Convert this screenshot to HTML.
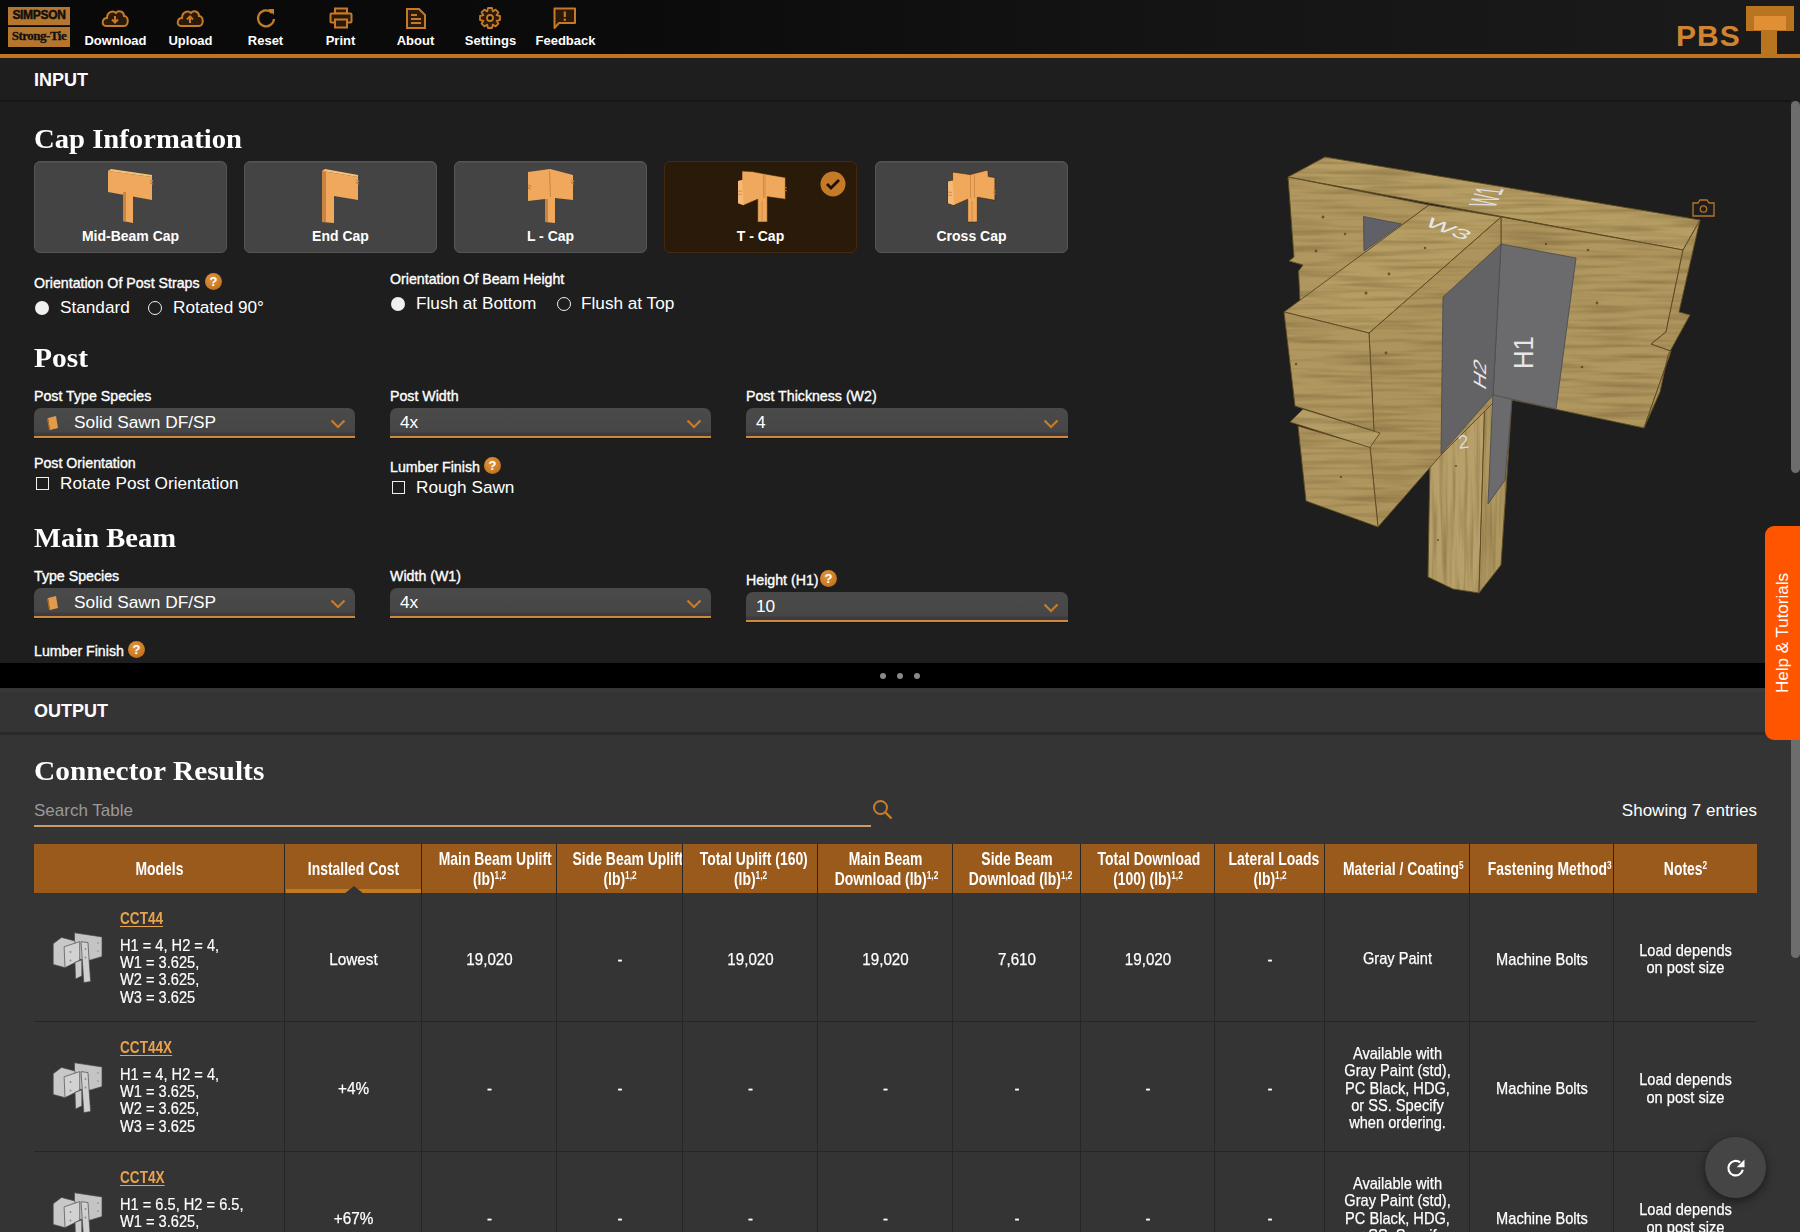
<!DOCTYPE html>
<html><head><meta charset="utf-8">
<style>
*{box-sizing:border-box;margin:0;padding:0}
html,body{width:1800px;height:1232px;overflow:hidden;background:#1e1e1e;font-family:"Liberation Sans",sans-serif;color:#fff}
.a{position:absolute;white-space:nowrap}
.tc{text-align:center}
sup{line-height:0}
#top{position:absolute;left:0;top:0;width:1800px;height:54px;background:linear-gradient(to right,#090909 0%,#0b0b0b 35%,#141414 65%,#1b1b1b 100%)}
#oline{position:absolute;left:0;top:54px;width:1800px;height:4px;background:#c2731f}
.nav{position:absolute;top:0;width:75px;height:54px;text-align:center}
.nav span{position:absolute;left:0;right:0;top:33px;font-size:13px;font-weight:bold;color:#fff}
.nav svg{position:absolute;left:27px;top:6px}
.lbl{position:absolute;font-size:14.2px;color:#fff;white-space:nowrap;-webkit-text-stroke:0.35px #fff}
.h2{position:absolute;font-family:"Liberation Serif",serif;font-weight:bold;font-size:27.5px;line-height:32px;color:#fff;white-space:nowrap;transform-origin:0 0}
.card{position:absolute;top:161px;width:193px;height:92px;background:#444;border-radius:6px;border:1px solid #555;box-shadow:inset 0 1px 0 #4c4c4c}
.card span{position:absolute;left:0;right:0;top:66px;text-align:center;font-size:14px;font-weight:bold}
.sel{position:absolute;height:30px;background:linear-gradient(to bottom,#4a4a4a 0,#464646 24px,#3f3a40 25px,#3f3a40 28px);border-radius:7px 7px 0 0;border-bottom:2px solid #c98a3a;box-shadow:0 1px 0 #1a1210}
.sel span{position:absolute;left:10px;top:4px;font-size:17.3px}
.sel svg{position:absolute;right:9px;top:11px}
.radio{position:absolute;font-size:17.2px;white-space:nowrap;margin-top:1px}
.help{position:absolute;width:17px;height:17px;border-radius:50%;background:radial-gradient(circle at 40% 35%,#e0963e 0,#c97a25 60%,#a9631a 100%);color:#fff;font-size:13px;font-weight:bold;text-align:center;line-height:17px}
</style></head><body>
<div id="top"></div>
<div id="oline"></div>

<!-- logo -->
<div class="a" style="left:8px;top:7px;width:62px;height:19px;background:#b5772e;border-bottom:1px solid #2a1a08"></div>
<div class="a" style="left:8px;top:27px;width:62px;height:20px;background:#b5772e"></div>
<div class="a" style="left:8px;top:8px;width:62px;text-align:center;font-size:12px;font-weight:bold;color:#111;letter-spacing:-0.3px;-webkit-text-stroke:0.5px #111">SIMPSON</div>
<div class="a" style="left:8px;top:28px;width:62px;text-align:center;font-family:'Liberation Serif',serif;font-size:13px;font-weight:bold;color:#111;letter-spacing:-0.5px;-webkit-text-stroke:0.3px #111">Strong-Tie</div>

<div class="nav" style="left:78px"><svg width="22" height="22" viewBox="0 0 22 22" style="left:26px;top:7px;overflow:visible"><path d="M2,19 C-3,19 -2,11 3,11 C3,5 9,3 12,6 C14,3 20,4 20,9 C25,9 25,19 20,19 Z" fill="#2b1a0a" stroke="#c47a27" stroke-width="2"/><path d="M11,9 L11,15 M8,12.5 L11,15.5 L14,12.5" stroke="#c47a27" stroke-width="2" fill="none"/></svg><span>Download</span></div>
<div class="nav" style="left:153px"><svg width="22" height="22" viewBox="0 0 22 22" style="left:26px;top:7px;overflow:visible"><path d="M2,19 C-3,19 -2,11 3,11 C3,5 9,3 12,6 C14,3 20,4 20,9 C25,9 25,19 20,19 Z" fill="#2b1a0a" stroke="#c47a27" stroke-width="2"/><path d="M11,16 L11,10 M8,12.5 L11,9.5 L14,12.5" stroke="#c47a27" stroke-width="2" fill="none"/></svg><span>Upload</span></div>
<div class="nav" style="left:228px"><svg width="22" height="22" viewBox="0 0 22 22" style="left:27px;top:7px"><path d="M17,6 A8,8 0 1 0 19,12" fill="none" stroke="#c47a27" stroke-width="2.2"/><path d="M13,2 L19,2 L19,8 Z" fill="#c47a27"/></svg><span>Reset</span></div>
<div class="nav" style="left:303px"><svg width="24" height="22" viewBox="0 0 24 22" style="left:26px;top:7px"><rect x="6" y="1.5" width="12" height="5" fill="#2b1a0a" stroke="#c47a27" stroke-width="2"/><rect x="1.5" y="6.5" width="21" height="9" rx="1" fill="#2b1a0a" stroke="#c47a27" stroke-width="2"/><rect x="6" y="12.5" width="12" height="8" fill="#2b1a0a" stroke="#c47a27" stroke-width="2"/></svg><span>Print</span></div>
<div class="nav" style="left:378px"><svg width="22" height="22" viewBox="0 0 22 22" style="left:27px;top:7px"><path d="M2,2 L14,2 L20,8 L20,21 L2,21 Z" fill="#2b1a0a" stroke="#c47a27" stroke-width="2"/><path d="M6,8 L12,8 M6,12 L16,12 M6,16 L16,16" stroke="#c47a27" stroke-width="2"/></svg><span>About</span></div>
<div class="nav" style="left:453px"><svg width="24" height="24" viewBox="-12 -12 24 24" style="left:25px;top:6px"><path d="M-2,-11 L2,-11 L2.8,-7.6 L5.6,-9.4 L8.4,-6.6 L6.6,-3.8 L10,-3 L10,1 L6.6,1.8 L8.4,4.6 L5.6,7.4 L2.8,5.6 L2,9 L-2,9 L-2.8,5.6 L-5.6,7.4 L-8.4,4.6 L-6.6,1.8 L-10,1 L-10,-3 L-6.6,-3.8 L-8.4,-6.6 L-5.6,-9.4 L-2.8,-7.6 Z" transform="translate(0,1)" fill="#2b1a0a" stroke="#c47a27" stroke-width="1.8" stroke-linejoin="round"/><circle cx="0" cy="0" r="3" fill="#0a0a0a" stroke="#c47a27" stroke-width="1.8"/></svg><span>Settings</span></div>
<div class="nav" style="left:528px"><svg width="24" height="24" viewBox="0 0 24 24" style="left:25px;top:7px"><path d="M1.5,1.5 L22,1.5 L22,16 L6,16 L1.5,21 Z" fill="#2b1a0a" stroke="#c47a27" stroke-width="2" stroke-linejoin="round"/><path d="M11.8,4.5 L11.8,10" stroke="#c47a27" stroke-width="2.2"/><circle cx="11.8" cy="12.8" r="1.3" fill="#c47a27"/></svg><span>Feedback</span></div>

<!-- PBS logo -->
<div class="a" style="left:1676px;top:19px;font-size:30px;font-weight:bold;color:#d1842f;letter-spacing:1px">PBS</div>
<div class="a" style="left:1746px;top:6px;width:48px;height:25px;background:#b8741f"></div>
<div class="a" style="left:1754px;top:16px;width:32px;height:14px;background:#e08f35"></div>
<div class="a" style="left:1761px;top:31px;width:16px;height:27px;background:#b8741f"></div>

<!-- INPUT header -->
<div class="a" style="left:34px;top:70px;font-size:18px;font-weight:bold">INPUT</div>
<div class="a" style="left:0;top:100px;width:1790px;height:2px;background:#161616"></div>

<div class="h2" style="left:34px;top:123px;transform:scaleX(1.043)">Cap Information</div>

<div class="card" style="left:34px"><span>Mid-Beam Cap</span></div>
<div class="card" style="left:244px"><span>End Cap</span></div>
<div class="card" style="left:454px"><span>L - Cap</span></div>
<div class="card" style="left:664px;background:#2a1a0a;border:1px solid #43290f;box-shadow:none"><span>T - Cap</span></div>
<div class="card" style="left:875px"><span>Cross Cap</span></div>

<div class="lbl" style="left:34px;top:275px">Orientation Of Post Straps</div>
<div class="lbl" style="left:390px;top:271px">Orientation Of Beam Height</div>


<!-- cap icons -->
<svg class="a" style="left:100px;top:165px" width="60" height="62" viewBox="100 165 60 62">
 <path d="M108,171 L152,177 L152,200 L108,192 Z" fill="#f0a95c"/>
 <path d="M108,171 L111,169 L152,175 L152,177 Z" fill="#f6c07a"/>
 <path d="M123,192 L133,194 L133,223 L123,221 Z" fill="#f0a95c"/>
 <path d="M123,192 L126,192 L126,222 L123,221 Z" fill="#c98540"/>
 <path d="M150,180 L153,181 L150,183 L153,184" stroke="#c98540" stroke-width="1" fill="none"/>
</svg>
<svg class="a" style="left:310px;top:165px" width="60" height="62" viewBox="310 165 60 62">
 <path d="M322,171 L358,177 L358,200 L334,196 L334,223 L322,222 Z" fill="#f0a95c"/>
 <path d="M322,171 L325,169 L358,175 L358,177 Z" fill="#f6c07a"/>
 <path d="M322,171 L326,172 L326,222 L322,222 Z" fill="#c98540"/>
 <path d="M356,180 L359,181 L356,183 L359,184" stroke="#c98540" stroke-width="1" fill="none"/>
</svg>
<svg class="a" style="left:520px;top:165px" width="60" height="62" viewBox="520 165 60 62">
 <path d="M528,172 L550,169 L573,175 L573,200 L555,198 L555,223 L545,222 L545,199 L528,201 Z" fill="#f0a95c"/>
 <path d="M549,172 L550,197 L551,197 L550,170 Z" fill="#c98540"/>
 <path d="M545,199 L548,199 L548,222 L545,222 Z" fill="#c98540"/>
 <path d="M528,185 L531,186 L528,188 L531,189 M571,180 L574,181 L571,183 L574,184" stroke="#c98540" stroke-width="1" fill="none"/>
</svg>
<svg class="a" style="left:730px;top:165px" width="62" height="62" viewBox="730 165 62 62">
 <path d="M742,171 L752,171.6 L785.4,177.6 L785.4,199.2 L767.3,196.7 L767.3,222 L757.7,222 L757.7,199.2 L743.6,205.3 L738,203.3 L738,181 L742,180 Z" fill="#f0a95c" stroke="#3a2208" stroke-width="0.6"/>
 <path d="M738,181 L742,180 L743.6,205.3 L738,203.3 Z" fill="#f5b978"/>
 <path d="M763.5,174 L763.5,198 M765,174 L765,198 M762,201 L762,221" stroke="#c98540" stroke-width="0.8" fill="none"/>
 <path d="M738,191 L742,191.5 M738,194 L742,194.5 M784,187 L787,188 M784,190 L787,191" stroke="#c98540" stroke-width="0.8" fill="none"/>
</svg>
<svg class="a" style="left:940px;top:165px" width="62" height="62" viewBox="940 165 62 62">
 <path d="M952.6,172 L970.2,174.6 L987.8,170 L988.3,176.6 L994.9,177.6 L994.9,200.3 L977.3,197.2 L977.3,222 L967.7,222 L967.7,199.2 L954.1,205.3 L948,203.3 L948,181.6 L952.6,180.6 Z" fill="#f0a95c" stroke="#3a2208" stroke-width="0.6"/>
 <path d="M948,181.6 L952.6,180.6 L954.1,205.3 L948,203.3 Z" fill="#f5b978"/>
 <path d="M970.5,175 L970.5,198 M974.5,175 L974.5,198 M972,201 L972,221" stroke="#c98540" stroke-width="0.8" fill="none"/>
 <path d="M948,192 L952,192.5 M948,195 L952,195.5 M993,190 L996,191 M993,193 L996,194" stroke="#c98540" stroke-width="0.8" fill="none"/>
</svg>
<!-- check -->
<svg class="a" style="left:820px;top:171px" width="26" height="26" viewBox="0 0 26 26"><circle cx="13" cy="13" r="12.5" fill="#c47a27"/><path d="M7,13 L11,17 L19,9" fill="none" stroke="#1a1008" stroke-width="2.8"/></svg>

<!-- help icons -->
<div class="help" style="left:205px;top:273px">?</div>
<div class="help" style="left:484px;top:457px">?</div>
<div class="help" style="left:820px;top:570px">?</div>
<div class="help" style="left:128px;top:641px">?</div>

<!-- radios -->
<div class="a" style="left:35px;top:301px;width:14px;height:14px;border-radius:50%;background:#f0f0f0"></div>
<div class="radio" style="left:60px;top:296px">Standard</div>
<div class="a" style="left:148px;top:301px;width:14px;height:14px;border-radius:50%;border:1.5px solid #f0f0f0"></div>
<div class="radio" style="left:173px;top:296px">Rotated 90°</div>
<div class="a" style="left:391px;top:297px;width:14px;height:14px;border-radius:50%;background:#f0f0f0"></div>
<div class="radio" style="left:416px;top:292px">Flush at Bottom</div>
<div class="a" style="left:557px;top:297px;width:14px;height:14px;border-radius:50%;border:1.5px solid #f0f0f0"></div>
<div class="radio" style="left:581px;top:292px">Flush at Top</div>
<!-- checkboxes -->
<div class="a" style="left:36px;top:477px;width:13px;height:13px;border:1.5px solid #f0f0f0"></div>
<div class="radio" style="left:60px;top:472px">Rotate Post Orientation</div>
<div class="a" style="left:392px;top:481px;width:13px;height:13px;border:1.5px solid #f0f0f0"></div>
<div class="radio" style="left:416px;top:476px">Rough Sawn</div>
<div class="h2" style="left:34px;top:342px;transform:scaleX(1.07)">Post</div>
<div class="lbl" style="left:34px;top:388px">Post Type Species</div>
<div class="lbl" style="left:390px;top:388px">Post Width</div>
<div class="lbl" style="left:746px;top:388px">Post Thickness (W2)</div>
<div class="sel" style="left:34px;top:408px;width:321px"><svg width="16" height="16" viewBox="0 0 16 16" style="left:11px;top:7px;right:auto"><path d="M3,3 L11,1 L13,13 L5,15 Z" fill="#e39a4a"/><path d="M3,3 L5,15 L4,15 L2,4 Z" fill="#b06a20"/></svg><span style="left:40px">Solid Sawn DF/SP</span><svg width="16" height="10" viewBox="0 0 16 10"><path d="M1.5,1.5 L8,8 L14.5,1.5" fill="none" stroke="#c97c2a" stroke-width="2.2"/></svg></div>
<div class="sel" style="left:390px;top:408px;width:321px"><span>4x</span><svg width="16" height="10" viewBox="0 0 16 10"><path d="M1.5,1.5 L8,8 L14.5,1.5" fill="none" stroke="#c97c2a" stroke-width="2.2"/></svg></div>
<div class="sel" style="left:746px;top:408px;width:322px"><span>4</span><svg width="16" height="10" viewBox="0 0 16 10"><path d="M1.5,1.5 L8,8 L14.5,1.5" fill="none" stroke="#c97c2a" stroke-width="2.2"/></svg></div>

<div class="lbl" style="left:34px;top:455px">Post Orientation</div>
<div class="lbl" style="left:390px;top:459px">Lumber Finish</div>

<div class="h2" style="left:34px;top:522px;transform:scaleX(1.04)">Main Beam</div>
<div class="lbl" style="left:34px;top:568px">Type Species</div>
<div class="lbl" style="left:390px;top:568px">Width (W1)</div>
<div class="lbl" style="left:746px;top:572px">Height (H1)</div>
<div class="sel" style="left:34px;top:588px;width:321px"><svg width="16" height="16" viewBox="0 0 16 16" style="left:11px;top:7px;right:auto"><path d="M3,3 L11,1 L13,13 L5,15 Z" fill="#e39a4a"/><path d="M3,3 L5,15 L4,15 L2,4 Z" fill="#b06a20"/></svg><span style="left:40px">Solid Sawn DF/SP</span><svg width="16" height="10" viewBox="0 0 16 10"><path d="M1.5,1.5 L8,8 L14.5,1.5" fill="none" stroke="#c97c2a" stroke-width="2.2"/></svg></div>
<div class="sel" style="left:390px;top:588px;width:321px"><span>4x</span><svg width="16" height="10" viewBox="0 0 16 10"><path d="M1.5,1.5 L8,8 L14.5,1.5" fill="none" stroke="#c97c2a" stroke-width="2.2"/></svg></div>
<div class="sel" style="left:746px;top:592px;width:322px"><span>10</span><svg width="16" height="10" viewBox="0 0 16 10"><path d="M1.5,1.5 L8,8 L14.5,1.5" fill="none" stroke="#c97c2a" stroke-width="2.2"/></svg></div>
<div class="lbl" style="left:34px;top:643px">Lumber Finish</div>


<!-- 3D model -->
<svg class="a" style="left:0;top:0" width="1800" height="663" viewBox="0 0 1800 663">
 <defs>
  <filter id="grain" x="1270" y="150" width="440" height="450" filterUnits="userSpaceOnUse" color-interpolation-filters="sRGB">
   <feTurbulence type="fractalNoise" baseFrequency="0.012 0.2" numOctaves="2" seed="5" result="n"/>
   <feColorMatrix in="n" type="matrix" values="0 0 0 0 0.45  0 0 0 0 0.36  0 0 0 0 0.2  0 0 0 -1.1 0.64" result="g"/>
   <feComposite in="g" in2="SourceAlpha" operator="in" result="gc"/>
   <feMerge><feMergeNode in="SourceGraphic"/><feMergeNode in="gc"/></feMerge>
  </filter>
  <filter id="grainv" x="1420" y="380" width="100" height="220" filterUnits="userSpaceOnUse" color-interpolation-filters="sRGB">
   <feTurbulence type="fractalNoise" baseFrequency="0.25 0.012" numOctaves="2" seed="7" result="n"/>
   <feColorMatrix in="n" type="matrix" values="0 0 0 0 0.45  0 0 0 0 0.36  0 0 0 0 0.2  0 0 0 -1.1 0.64" result="g"/>
   <feComposite in="g" in2="SourceAlpha" operator="in" result="gc"/>
   <feMerge><feMergeNode in="SourceGraphic"/><feMergeNode in="gc"/></feMerge>
  </filter>
 </defs>
 <g stroke="#5a4822" stroke-width="0.9" stroke-linejoin="round" filter="url(#grainv)">
  <path d="M1430,455 L1485,396 L1479,593 L1453,589 L1428,577 Z" fill="#b7a069"/>
  <path d="M1485,396 L1512,399 L1501,565 L1479,593 Z" fill="#af9760"/>
 </g>
 <g stroke="#5a4822" stroke-width="0.9" stroke-linejoin="round" filter="url(#grain)">
  <path d="M1288,177 L1325,157 L1700,220 L1683,250 Z" fill="#b59d63"/>
  <path d="M1288,177 L1429,205 L1300,301 L1298.5,271 L1303,265 L1289,261 L1294,257 Z" fill="#b0975f"/>
  <path d="M1501,217 L1683,250 L1666,332 L1651,344 L1671,351 L1644,428 L1512,400 L1501,395 Z" fill="#b0975f"/>
  <path d="M1683,250 L1700,220 L1679,312 L1690,315 L1668,355 L1660,392 L1644,428 L1671,351 L1651,344 L1666,332 Z" fill="#ad945c"/>
  <path d="M1369,333 L1501,217 L1501,395 L1441,455 L1378,527 L1370,447 L1374,431 Z" fill="#ad945c"/>
  <path d="M1284,312 L1429,205 L1501,217 L1369,333 Z" fill="#b59d63"/>
  <path d="M1284,312 L1369,333 L1374,431 L1295,406 Z" fill="#b0975f"/>
  <path d="M1298,426 L1370,447 L1378,527 L1306,501 Z" fill="#b0975f"/>
  <path d="M1303,409 L1380,433 L1370,447.5 L1290,422 Z" fill="#b59e66"/>
 </g>
 <g stroke="#4e4e50" stroke-width="0.9" stroke-linejoin="round">
  <path d="M1493,392 L1512,399 L1505,480 L1488,504 Z" fill="#6b6b6e"/>
  <path d="M1363.5,216.5 L1401.5,224 L1364,251 Z" fill="#5f6068"/>
  <path d="M1501,244 L1576,258 L1556,409 L1493,395 Z" fill="#6b6b6e"/>
  <path d="M1501,244 L1443,297 L1441,454 L1493,395 Z" fill="#636366"/>
 </g>
 <g fill="#5a4420" opacity="0.8">
  <circle cx="1366" cy="293" r="1.5"/><circle cx="1389" cy="274" r="1.4"/><circle cx="1425" cy="248" r="1.3"/><circle cx="1386" cy="353" r="1.4"/><circle cx="1296" cy="364" r="1.3"/>
  <circle cx="1323" cy="217" r="1.5"/><circle cx="1316" cy="251" r="1.4"/><circle cx="1345" cy="234" r="1.3"/><circle cx="1546" cy="244" r="1.2"/><circle cx="1588" cy="250" r="1.3"/><circle cx="1597" cy="303" r="1.4"/><circle cx="1582" cy="367" r="1.3"/>
  <circle cx="1341" cy="477" r="1.2"/><circle cx="1438" cy="540" r="1.1"/><circle cx="1456" cy="466" r="1.1"/>
 </g>
 <g fill="#e6e6e6" font-family="Liberation Sans">
  <text transform="translate(1533,369) rotate(-90) scale(0.95,1)" font-size="27">H1</text>
  <text transform="translate(1486,391) rotate(-90) skewX(-30) scale(1,0.85)" font-size="21">H2</text>
  <text transform="translate(1423,225) rotate(20) scale(1.25,0.62) skewX(-15)" font-size="24">W3</text>
  <text transform="matrix(0.5,-1.05,3.2,0.35,1495,208)" font-size="12" fill="#ddd">W1</text>
  <text transform="translate(1459,449) rotate(-8)" font-size="19" fill="#d8d8d8">2</text>
 </g>
 <g stroke="#b8752a" stroke-width="1.3" fill="none"><path d="M1693,203 L1698,203 L1700,200 L1707,200 L1709,203 L1714,203 L1714,216 L1693,216 Z"/><circle cx="1703.5" cy="209" r="3.2"/></g>
</svg>
<!-- splitter -->
<div class="a" style="left:0;top:663px;width:1800px;height:25px;background:#000"></div>

<!-- OUTPUT -->
<div class="a" style="left:0;top:688px;width:1800px;height:544px;background:#343434"></div>
<div class="a" style="left:0;top:689px;width:1790px;height:3px;background:#383838"></div>
<div class="a" style="left:0;top:732px;width:1790px;height:3px;background:#2a2a2a"></div>
<div class="a" style="left:34px;top:701px;font-size:18px;font-weight:bold">OUTPUT</div>
<div class="h2" style="left:34px;top:755px;transform:scaleX(1.068)">Connector Results</div>
<div class="a" style="left:34px;top:801px;font-size:17px;color:#9a9a9a">Search Table</div>
<div class="a" style="left:34px;top:825px;width:837px;height:2px;background:#c99a6c"></div>
<svg class="a" style="left:872px;top:799px" width="22" height="22" viewBox="0 0 22 22"><circle cx="8.5" cy="8.5" r="6.5" fill="none" stroke="#c97c2a" stroke-width="2"/><path d="M13.5,13.5 L19.5,19.5" stroke="#c97c2a" stroke-width="2.4"/></svg>
<div class="a" style="left:1600px;top:801px;width:1157px;font-size:17px;color:#fff;text-align:right;left:600px">Showing 7 entries</div>
<!--TABLE-->
<div class="a" style="left:34px;top:844px;width:1723px;height:49px;background:#9a5a1c"></div>
<div class="a" style="left:286px;top:889px;width:136px;height:4px;background:#c27a22"></div>
<svg class="a" style="left:343px;top:885px" width="22" height="9" viewBox="0 0 22 9"><path d="M1,9 L11,1 L21,9 Z" fill="#333"/></svg>
<div class="a tc" style="left:34px;top:858.5px;width:251px;line-height:20px;font-size:18.5px;font-weight:bold;color:#fff"><div style="transform:scaleX(0.753);transform-origin:50% 50%;white-space:nowrap">Models</div></div>
<div class="a tc" style="left:285px;top:858.5px;width:137px;line-height:20px;font-size:18.5px;font-weight:bold;color:#fff"><div style="transform:scaleX(0.753);transform-origin:50% 50%;white-space:nowrap">Installed Cost</div></div>
<div class="a tc" style="left:422px;top:848.5px;width:135px;line-height:20px;font-size:18.5px;font-weight:bold;color:#fff"><div style="transform:scaleX(0.753);transform-origin:50% 50%;white-space:nowrap">Main Beam Uplift<br>(lb)<sup style="font-size:11px;vertical-align:6px;font-weight:bold">1,2</sup></div></div>
<div class="a tc" style="left:557px;top:848.5px;width:126px;line-height:20px;font-size:18.5px;font-weight:bold;color:#fff"><div style="transform:scaleX(0.753);transform-origin:50% 50%;white-space:nowrap">Side Beam Uplift<br>(lb)<sup style="font-size:11px;vertical-align:6px;font-weight:bold">1,2</sup></div></div>
<div class="a tc" style="left:683px;top:848.5px;width:135px;line-height:20px;font-size:18.5px;font-weight:bold;color:#fff"><div style="transform:scaleX(0.753);transform-origin:50% 50%;white-space:nowrap">Total Uplift (160)<br>(lb)<sup style="font-size:11px;vertical-align:6px;font-weight:bold">1,2</sup></div></div>
<div class="a tc" style="left:818px;top:848.5px;width:135px;line-height:20px;font-size:18.5px;font-weight:bold;color:#fff"><div style="transform:scaleX(0.753);transform-origin:50% 50%;white-space:nowrap">Main Beam<br>Download (lb)<sup style="font-size:11px;vertical-align:6px;font-weight:bold">1,2</sup></div></div>
<div class="a tc" style="left:953px;top:848.5px;width:128px;line-height:20px;font-size:18.5px;font-weight:bold;color:#fff"><div style="transform:scaleX(0.753);transform-origin:50% 50%;white-space:nowrap">Side Beam<br>Download (lb)<sup style="font-size:11px;vertical-align:6px;font-weight:bold">1,2</sup></div></div>
<div class="a tc" style="left:1081px;top:848.5px;width:134px;line-height:20px;font-size:18.5px;font-weight:bold;color:#fff"><div style="transform:scaleX(0.753);transform-origin:50% 50%;white-space:nowrap">Total Download<br>(100) (lb)<sup style="font-size:11px;vertical-align:6px;font-weight:bold">1,2</sup></div></div>
<div class="a tc" style="left:1215px;top:848.5px;width:110px;line-height:20px;font-size:18.5px;font-weight:bold;color:#fff"><div style="transform:scaleX(0.753);transform-origin:50% 50%;white-space:nowrap">Lateral Loads<br>(lb)<sup style="font-size:11px;vertical-align:6px;font-weight:bold">1,2</sup></div></div>
<div class="a tc" style="left:1325px;top:858.5px;width:145px;line-height:20px;font-size:18.5px;font-weight:bold;color:#fff"><div style="transform:scaleX(0.753);transform-origin:50% 50%;white-space:nowrap">Material / Coating<sup style="font-size:11px;vertical-align:6px;font-weight:bold">5</sup></div></div>
<div class="a tc" style="left:1470px;top:858.5px;width:144px;line-height:20px;font-size:18.5px;font-weight:bold;color:#fff"><div style="transform:scaleX(0.753);transform-origin:50% 50%;white-space:nowrap">Fastening Method<sup style="font-size:11px;vertical-align:6px;font-weight:bold">3</sup></div></div>
<div class="a tc" style="left:1614px;top:858.5px;width:143px;line-height:20px;font-size:18.5px;font-weight:bold;color:#fff"><div style="transform:scaleX(0.753);transform-origin:50% 50%;white-space:nowrap">Notes<sup style="font-size:11px;vertical-align:6px;font-weight:bold">2</sup></div></div>
<div class="a" style="left:120px;top:910px;font-size:17px;line-height:18px;color:#e9a24e;font-weight:bold;text-decoration:underline;text-underline-offset:2px;transform:scaleX(0.8);transform-origin:0 0">CCT44</div>
<div class="a" style="left:120px;top:937px;font-size:17px;line-height:17.2px;color:#fff;-webkit-text-stroke:0.2px #fff;transform:scaleX(0.86);transform-origin:0 0">H1 = 4, H2 = 4,<br>W1 = 3.625,<br>W2 = 3.625,<br>W3 = 3.625</div>
<div class="a tc" style="left:285px;top:950.5px;width:137px;line-height:17px;font-size:17px;font-weight:normal;color:#fff;-webkit-text-stroke:0.25px #fff"><div style="transform:scaleX(0.9);transform-origin:50% 50%;white-space:nowrap">Lowest</div></div>
<div class="a tc" style="left:422px;top:950.5px;width:135px;line-height:17px;font-size:17px;font-weight:normal;color:#fff;-webkit-text-stroke:0.25px #fff"><div style="transform:scaleX(0.89);transform-origin:50% 50%;white-space:nowrap">19,020</div></div>
<div class="a tc" style="left:557px;top:950.5px;width:126px;line-height:17px;font-size:17px;font-weight:normal;color:#fff;-webkit-text-stroke:0.25px #fff"><div style="transform:scaleX(0.89);transform-origin:50% 50%;white-space:nowrap">-</div></div>
<div class="a tc" style="left:683px;top:950.5px;width:135px;line-height:17px;font-size:17px;font-weight:normal;color:#fff;-webkit-text-stroke:0.25px #fff"><div style="transform:scaleX(0.89);transform-origin:50% 50%;white-space:nowrap">19,020</div></div>
<div class="a tc" style="left:818px;top:950.5px;width:135px;line-height:17px;font-size:17px;font-weight:normal;color:#fff;-webkit-text-stroke:0.25px #fff"><div style="transform:scaleX(0.89);transform-origin:50% 50%;white-space:nowrap">19,020</div></div>
<div class="a tc" style="left:953px;top:950.5px;width:128px;line-height:17px;font-size:17px;font-weight:normal;color:#fff;-webkit-text-stroke:0.25px #fff"><div style="transform:scaleX(0.89);transform-origin:50% 50%;white-space:nowrap">7,610</div></div>
<div class="a tc" style="left:1081px;top:950.5px;width:134px;line-height:17px;font-size:17px;font-weight:normal;color:#fff;-webkit-text-stroke:0.25px #fff"><div style="transform:scaleX(0.89);transform-origin:50% 50%;white-space:nowrap">19,020</div></div>
<div class="a tc" style="left:1215px;top:950.5px;width:110px;line-height:17px;font-size:17px;font-weight:normal;color:#fff;-webkit-text-stroke:0.25px #fff"><div style="transform:scaleX(0.89);transform-origin:50% 50%;white-space:nowrap">-</div></div>
<div class="a tc" style="left:1325px;top:950.4px;width:145px;line-height:17.3px;font-size:17px;font-weight:normal;color:#fff;-webkit-text-stroke:0.25px #fff"><div style="transform:scaleX(0.86);transform-origin:50% 50%;white-space:nowrap">Gray Paint</div></div>
<div class="a tc" style="left:1470px;top:950.5px;width:144px;line-height:17px;font-size:17px;font-weight:normal;color:#fff;-webkit-text-stroke:0.25px #fff"><div style="transform:scaleX(0.86);transform-origin:50% 50%;white-space:nowrap">Machine Bolts</div></div>
<div class="a tc" style="left:1614px;top:941.5px;width:143px;line-height:17.5px;font-size:17px;font-weight:normal;color:#fff;-webkit-text-stroke:0.25px #fff"><div style="transform:scaleX(0.86);transform-origin:50% 50%;white-space:nowrap">Load depends<br>on post size</div></div>
<div class="a" style="left:120px;top:1039px;font-size:17px;line-height:18px;color:#e9a24e;font-weight:bold;text-decoration:underline;text-underline-offset:2px;transform:scaleX(0.8);transform-origin:0 0">CCT44X</div>
<div class="a" style="left:120px;top:1066px;font-size:17px;line-height:17.2px;color:#fff;-webkit-text-stroke:0.2px #fff;transform:scaleX(0.86);transform-origin:0 0">H1 = 4, H2 = 4,<br>W1 = 3.625,<br>W2 = 3.625,<br>W3 = 3.625</div>
<div class="a tc" style="left:285px;top:1080.0px;width:137px;line-height:17px;font-size:17px;font-weight:normal;color:#fff;-webkit-text-stroke:0.25px #fff"><div style="transform:scaleX(0.9);transform-origin:50% 50%;white-space:nowrap">+4%</div></div>
<div class="a tc" style="left:422px;top:1080.0px;width:135px;line-height:17px;font-size:17px;font-weight:normal;color:#fff;-webkit-text-stroke:0.25px #fff"><div style="transform:scaleX(0.89);transform-origin:50% 50%;white-space:nowrap">-</div></div>
<div class="a tc" style="left:557px;top:1080.0px;width:126px;line-height:17px;font-size:17px;font-weight:normal;color:#fff;-webkit-text-stroke:0.25px #fff"><div style="transform:scaleX(0.89);transform-origin:50% 50%;white-space:nowrap">-</div></div>
<div class="a tc" style="left:683px;top:1080.0px;width:135px;line-height:17px;font-size:17px;font-weight:normal;color:#fff;-webkit-text-stroke:0.25px #fff"><div style="transform:scaleX(0.89);transform-origin:50% 50%;white-space:nowrap">-</div></div>
<div class="a tc" style="left:818px;top:1080.0px;width:135px;line-height:17px;font-size:17px;font-weight:normal;color:#fff;-webkit-text-stroke:0.25px #fff"><div style="transform:scaleX(0.89);transform-origin:50% 50%;white-space:nowrap">-</div></div>
<div class="a tc" style="left:953px;top:1080.0px;width:128px;line-height:17px;font-size:17px;font-weight:normal;color:#fff;-webkit-text-stroke:0.25px #fff"><div style="transform:scaleX(0.89);transform-origin:50% 50%;white-space:nowrap">-</div></div>
<div class="a tc" style="left:1081px;top:1080.0px;width:134px;line-height:17px;font-size:17px;font-weight:normal;color:#fff;-webkit-text-stroke:0.25px #fff"><div style="transform:scaleX(0.89);transform-origin:50% 50%;white-space:nowrap">-</div></div>
<div class="a tc" style="left:1215px;top:1080.0px;width:110px;line-height:17px;font-size:17px;font-weight:normal;color:#fff;-webkit-text-stroke:0.25px #fff"><div style="transform:scaleX(0.89);transform-origin:50% 50%;white-space:nowrap">-</div></div>
<div class="a tc" style="left:1325px;top:1045.2px;width:145px;line-height:17.3px;font-size:17px;font-weight:normal;color:#fff;-webkit-text-stroke:0.25px #fff"><div style="transform:scaleX(0.86);transform-origin:50% 50%;white-space:nowrap">Available with<br>Gray Paint (std),<br>PC Black, HDG,<br>or SS. Specify<br>when ordering.</div></div>
<div class="a tc" style="left:1470px;top:1080.0px;width:144px;line-height:17px;font-size:17px;font-weight:normal;color:#fff;-webkit-text-stroke:0.25px #fff"><div style="transform:scaleX(0.86);transform-origin:50% 50%;white-space:nowrap">Machine Bolts</div></div>
<div class="a tc" style="left:1614px;top:1071.0px;width:143px;line-height:17.5px;font-size:17px;font-weight:normal;color:#fff;-webkit-text-stroke:0.25px #fff"><div style="transform:scaleX(0.86);transform-origin:50% 50%;white-space:nowrap">Load depends<br>on post size</div></div>
<div class="a" style="left:120px;top:1169px;font-size:17px;line-height:18px;color:#e9a24e;font-weight:bold;text-decoration:underline;text-underline-offset:2px;transform:scaleX(0.8);transform-origin:0 0">CCT4X</div>
<div class="a" style="left:120px;top:1196px;font-size:17px;line-height:17.2px;color:#fff;-webkit-text-stroke:0.2px #fff;transform:scaleX(0.86);transform-origin:0 0">H1 = 6.5, H2 = 6.5,<br>W1 = 3.625,<br>W2 = 3.625,<br>W3 = 3.625</div>
<div class="a tc" style="left:285px;top:1210.0px;width:137px;line-height:17px;font-size:17px;font-weight:normal;color:#fff;-webkit-text-stroke:0.25px #fff"><div style="transform:scaleX(0.9);transform-origin:50% 50%;white-space:nowrap">+67%</div></div>
<div class="a tc" style="left:422px;top:1210.0px;width:135px;line-height:17px;font-size:17px;font-weight:normal;color:#fff;-webkit-text-stroke:0.25px #fff"><div style="transform:scaleX(0.89);transform-origin:50% 50%;white-space:nowrap">-</div></div>
<div class="a tc" style="left:557px;top:1210.0px;width:126px;line-height:17px;font-size:17px;font-weight:normal;color:#fff;-webkit-text-stroke:0.25px #fff"><div style="transform:scaleX(0.89);transform-origin:50% 50%;white-space:nowrap">-</div></div>
<div class="a tc" style="left:683px;top:1210.0px;width:135px;line-height:17px;font-size:17px;font-weight:normal;color:#fff;-webkit-text-stroke:0.25px #fff"><div style="transform:scaleX(0.89);transform-origin:50% 50%;white-space:nowrap">-</div></div>
<div class="a tc" style="left:818px;top:1210.0px;width:135px;line-height:17px;font-size:17px;font-weight:normal;color:#fff;-webkit-text-stroke:0.25px #fff"><div style="transform:scaleX(0.89);transform-origin:50% 50%;white-space:nowrap">-</div></div>
<div class="a tc" style="left:953px;top:1210.0px;width:128px;line-height:17px;font-size:17px;font-weight:normal;color:#fff;-webkit-text-stroke:0.25px #fff"><div style="transform:scaleX(0.89);transform-origin:50% 50%;white-space:nowrap">-</div></div>
<div class="a tc" style="left:1081px;top:1210.0px;width:134px;line-height:17px;font-size:17px;font-weight:normal;color:#fff;-webkit-text-stroke:0.25px #fff"><div style="transform:scaleX(0.89);transform-origin:50% 50%;white-space:nowrap">-</div></div>
<div class="a tc" style="left:1215px;top:1210.0px;width:110px;line-height:17px;font-size:17px;font-weight:normal;color:#fff;-webkit-text-stroke:0.25px #fff"><div style="transform:scaleX(0.89);transform-origin:50% 50%;white-space:nowrap">-</div></div>
<div class="a tc" style="left:1325px;top:1175.2px;width:145px;line-height:17.3px;font-size:17px;font-weight:normal;color:#fff;-webkit-text-stroke:0.25px #fff"><div style="transform:scaleX(0.86);transform-origin:50% 50%;white-space:nowrap">Available with<br>Gray Paint (std),<br>PC Black, HDG,<br>or SS. Specify<br>when ordering.</div></div>
<div class="a tc" style="left:1470px;top:1210.0px;width:144px;line-height:17px;font-size:17px;font-weight:normal;color:#fff;-webkit-text-stroke:0.25px #fff"><div style="transform:scaleX(0.86);transform-origin:50% 50%;white-space:nowrap">Machine Bolts</div></div>
<div class="a tc" style="left:1614px;top:1201.0px;width:143px;line-height:17.5px;font-size:17px;font-weight:normal;color:#fff;-webkit-text-stroke:0.25px #fff"><div style="transform:scaleX(0.86);transform-origin:50% 50%;white-space:nowrap">Load depends<br>on post size</div></div>
<div class="a" style="left:284px;top:844px;width:1px;height:388px;background:#262626"></div>
<div class="a" style="left:421px;top:844px;width:1px;height:388px;background:#262626"></div>
<div class="a" style="left:556px;top:844px;width:1px;height:388px;background:#262626"></div>
<div class="a" style="left:682px;top:844px;width:1px;height:388px;background:#262626"></div>
<div class="a" style="left:817px;top:844px;width:1px;height:388px;background:#262626"></div>
<div class="a" style="left:952px;top:844px;width:1px;height:388px;background:#262626"></div>
<div class="a" style="left:1080px;top:844px;width:1px;height:388px;background:#262626"></div>
<div class="a" style="left:1214px;top:844px;width:1px;height:388px;background:#262626"></div>
<div class="a" style="left:1324px;top:844px;width:1px;height:388px;background:#262626"></div>
<div class="a" style="left:1469px;top:844px;width:1px;height:388px;background:#262626"></div>
<div class="a" style="left:1613px;top:844px;width:1px;height:388px;background:#262626"></div>
<div class="a" style="left:34px;top:1021px;width:1723px;height:1px;background:#262626"></div>
<div class="a" style="left:34px;top:1151px;width:1723px;height:1px;background:#262626"></div>
<!--/TABLE-->
<!-- thumbnails -->
<svg class="a" style="left:50px;top:930px" width="56" height="56" viewBox="0 0 56 56">
 <g stroke="#4a4a4a" stroke-width="0.7" stroke-linejoin="round">
 <path d="M24.5,2.8 L52,6.9 L52,26.6 L40.6,30 L24.5,29 Z" fill="#c4c4c4"/>
 <path d="M3.2,13.7 L11.5,7.4 L25,11 L25,32.4 L14.6,37.6 L3.2,34.4 Z" fill="#c8c8c8"/>
 <path d="M14.1,16.8 L29.7,11.6 L29.7,30.3 L15,37.6 Z" fill="#d2d2d2"/>
 <path d="M25,32.4 L31.8,29.8 L31.8,45.9 L25.5,49 Z" fill="#cbcbcb"/>
 <path d="M31,11.6 L38,12.6 L39,29 L40.6,51.6 L33.8,52.6 L32.3,29.8 Z" fill="#cfcfcf"/>
 </g>
 <g fill="#8a8a8a"><circle cx="20.5" cy="22" r="0.9"/><circle cx="20.5" cy="30.5" r="0.9"/><circle cx="35.5" cy="19" r="0.9"/><circle cx="35.5" cy="27.5" r="0.9"/><circle cx="48" cy="13" r="0.8"/><circle cx="48" cy="21" r="0.8"/></g>
</svg><svg class="a" style="left:50px;top:1060px" width="56" height="56" viewBox="0 0 56 56">
 <g stroke="#4a4a4a" stroke-width="0.7" stroke-linejoin="round">
 <path d="M24.5,2.8 L52,6.9 L52,26.6 L40.6,30 L24.5,29 Z" fill="#c4c4c4"/>
 <path d="M3.2,13.7 L11.5,7.4 L25,11 L25,32.4 L14.6,37.6 L3.2,34.4 Z" fill="#c8c8c8"/>
 <path d="M14.1,16.8 L29.7,11.6 L29.7,30.3 L15,37.6 Z" fill="#d2d2d2"/>
 <path d="M25,32.4 L31.8,29.8 L31.8,45.9 L25.5,49 Z" fill="#cbcbcb"/>
 <path d="M31,11.6 L38,12.6 L39,29 L40.6,51.6 L33.8,52.6 L32.3,29.8 Z" fill="#cfcfcf"/>
 </g>
 <g fill="#8a8a8a"><circle cx="20.5" cy="22" r="0.9"/><circle cx="20.5" cy="30.5" r="0.9"/><circle cx="35.5" cy="19" r="0.9"/><circle cx="35.5" cy="27.5" r="0.9"/><circle cx="48" cy="13" r="0.8"/><circle cx="48" cy="21" r="0.8"/></g>
</svg><svg class="a" style="left:50px;top:1190px" width="56" height="56" viewBox="0 0 56 56">
 <g stroke="#4a4a4a" stroke-width="0.7" stroke-linejoin="round">
 <path d="M24.5,2.8 L52,6.9 L52,26.6 L40.6,30 L24.5,29 Z" fill="#c4c4c4"/>
 <path d="M3.2,13.7 L11.5,7.4 L25,11 L25,32.4 L14.6,37.6 L3.2,34.4 Z" fill="#c8c8c8"/>
 <path d="M14.1,16.8 L29.7,11.6 L29.7,30.3 L15,37.6 Z" fill="#d2d2d2"/>
 <path d="M25,32.4 L31.8,29.8 L31.8,45.9 L25.5,49 Z" fill="#cbcbcb"/>
 <path d="M31,11.6 L38,12.6 L39,29 L40.6,51.6 L33.8,52.6 L32.3,29.8 Z" fill="#cfcfcf"/>
 </g>
 <g fill="#8a8a8a"><circle cx="20.5" cy="22" r="0.9"/><circle cx="20.5" cy="30.5" r="0.9"/><circle cx="35.5" cy="19" r="0.9"/><circle cx="35.5" cy="27.5" r="0.9"/><circle cx="48" cy="13" r="0.8"/><circle cx="48" cy="21" r="0.8"/></g>
</svg>
<!-- splitter dots -->
<div class="a" style="left:880px;top:673px;width:6px;height:6px;border-radius:50%;background:#8a8a8a"></div>
<div class="a" style="left:897px;top:673px;width:6px;height:6px;border-radius:50%;background:#8a8a8a"></div>
<div class="a" style="left:914px;top:673px;width:6px;height:6px;border-radius:50%;background:#8a8a8a"></div>
<!-- scrollbars -->
<div class="a" style="left:1791px;top:101px;width:9px;height:372px;border-radius:5px;background:#6d6d6d"></div>
<div class="a" style="left:1791px;top:740px;width:9px;height:218px;border-radius:0 0 5px 5px;background:#6d6d6d"></div>
<!-- help tab -->
<div class="a" style="left:1765px;top:526px;width:40px;height:214px;border-radius:9px 0 0 9px;background:#ff5500"></div>
<div class="a" style="left:1772px;top:633px;width:0;height:0"><div style="position:absolute;left:0;top:0;transform:translate(-50%,-50%) rotate(-90deg);font-size:17px;color:#fff;white-space:nowrap;left:11px">Help &amp; Tutorials</div></div>
<!-- float button -->
<div class="a" style="left:1705px;top:1137px;width:61px;height:61px;border-radius:50%;background:#454545;box-shadow:0 3px 10px rgba(0,0,0,0.5)"></div>
<svg class="a" style="left:1715px;top:1147px" width="42" height="42" viewBox="1715 1147 42 42"><path d="M1742.8,1169.8 A7.3,7.3 0 1 1 1740.2,1162.4" fill="none" stroke="#fff" stroke-width="2.2"/><path d="M1744.5,1159.5 L1744.5,1167.3 L1736.7,1167.3 Z" fill="#fff"/></svg>

</body></html>
